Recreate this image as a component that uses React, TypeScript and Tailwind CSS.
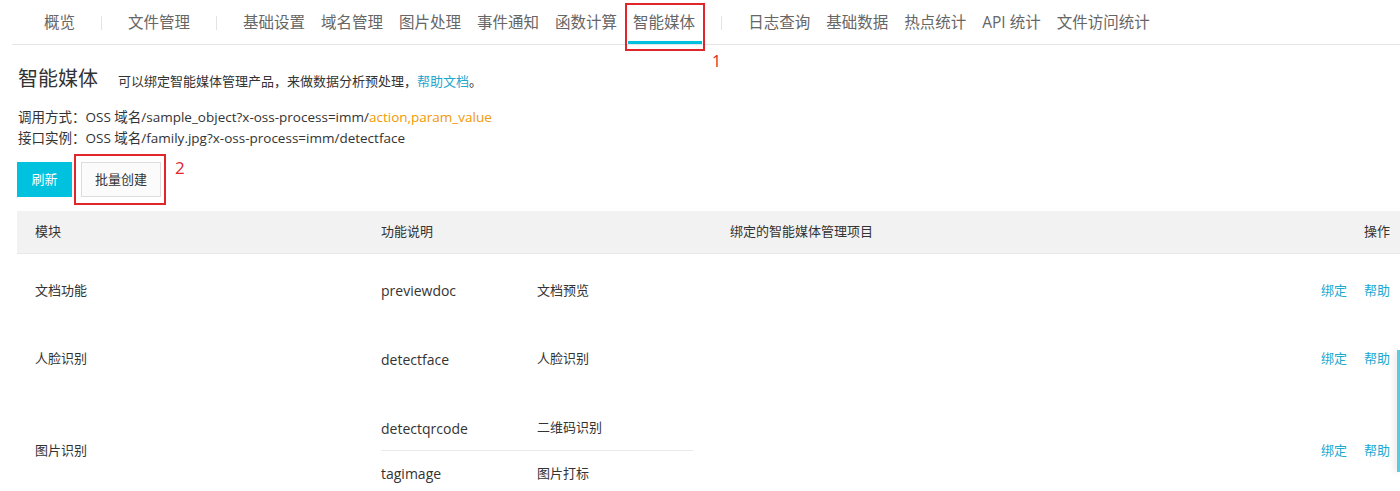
import React from 'react';

const font = { fontFamily: '"Open Sans", "Noto Sans CJK SC", sans-serif' };

const tabsA = ['概览'];
const tabsB = ['文件管理'];
const tabsC = ['基础设置', '域名管理', '图片处理', '事件通知', '函数计算', '智能媒体'];
const tabsD = ['日志查询', '基础数据', '热点统计', 'API 统计', '文件访问统计'];

const Tab = ({ label, active }: { label: string; active?: boolean }) => (
    <div className="relative flex h-full items-center px-[5px]">
        <span className="text-[#666]">{label}</span>
        {active && <div className="absolute bottom-0 left-0 right-[-2px] h-[3px] bg-[#00c1de]" />}
        {active && (
            <>
                <div className="absolute left-[-3px] right-[-5px] top-[1px] h-[48px] border-2 border-[#e0262b]" />
                <span className="absolute left-[84px] top-[47px] text-[16px] text-[#e0262b]">1</span>
            </>
        )}
    </div>
);

const Sep = () => <div className="mx-[21px] h-[14px] w-px bg-[#e3e3e3]" />;

const Group = ({ items, active }: { items: string[]; active?: string }) => (
    <div className="flex h-full items-center gap-[6px]">
        {items.map((t) => <Tab key={t} label={t} active={t === active} />)}
    </div>
);

const Link = ({ children }: { children: React.ReactNode }) => <span className="text-[#20a8cf]">{children}</span>;

const Ops = () => (
    <td className="pr-[10px] text-right">
        <Link>绑定</Link><span className="ml-[17px]"><Link>帮助</Link></span>
    </td>
);

const Fn = ({ code, desc }: { code: string; desc: string }) => (
    <div className="flex items-center">
        <span className="w-[156px] text-[14px]">{code}</span>
        <span>{desc}</span>
    </div>
);

export default function App() {
    return (
        <div className="relative h-[491px] w-[1400px] overflow-hidden bg-white text-[#333]" style={font}>
            <div className="ml-[12px] flex h-[45px] items-center border-b border-[#e5e5e5] pl-[27px] pt-[2px] text-[15.5px]">
                <Group items={tabsA} />
                <Sep />
                <Group items={tabsB} />
                <Sep />
                <Group items={tabsC} active="智能媒体" />
                <Sep />
                <Group items={tabsD} />
            </div>

            <div className="pl-[17px]">
                <div className="mt-[20px] flex items-baseline pl-px">
                    <h2 className="text-[20px] leading-[28px] text-[#333]">智能媒体</h2>
                    <span className="ml-[20px] text-[13px] text-[#333]">
                        可以绑定智能媒体管理产品，来做数据分析预处理，<Link>帮助文档</Link>。
                    </span>
                </div>

                <div className="mt-[14px] pl-px text-[13.5px] leading-[21px] text-[#333]">
                    <div>调用方式：OSS 域名/sample_object?x-oss-process=imm/<span className="text-[#f39800]">action,param_value</span></div>
                    <div>接口实例：OSS 域名/family.jpg?x-oss-process=imm/detectface</div>
                </div>

                <div className="mt-[13px] flex items-center gap-[9px]">
                    <button className="h-[35px] w-[55px] bg-[#00c1de] text-[13px] text-white">刷新</button>
                    <div className="relative">
                        <button className="h-[35px] w-[80px] border border-[#ddd] bg-[#fbfbfb] text-[13px] text-[#333]">批量创建</button>
                        <div className="absolute left-[-7px] top-[-8px] h-[51px] w-[92px] border-2 border-[#e0262b]" />
                        <span className="absolute left-[94px] top-[-7px] text-[17px] text-[#e0262b]">2</span>
                    </div>
                </div>

                <table className="mt-[14px] w-[1383px] border-collapse text-[13px]">
                    <thead>
                        <tr className="h-[42px] border-b border-[#e8e8e8] bg-[#f2f2f2] text-left">
                            <th className="w-[364px] pl-[18px] font-normal">模块</th>
                            <th className="w-[349px] font-normal">功能说明</th>
                            <th className="font-normal">绑定的智能媒体管理项目</th>
                            <th className="w-[100px] pr-[10px] text-right font-normal">操作</th>
                        </tr>
                    </thead>
                    <tbody>
                        <tr className="h-[74px]">
                            <td className="pl-[18px]">文档功能</td>
                            <td><Fn code="previewdoc" desc="文档预览" /></td>
                            <td />
                            <Ops />
                        </tr>
                        <tr className="h-[64px]">
                            <td className="pl-[18px]">人脸识别</td>
                            <td><Fn code="detectface" desc="人脸识别" /></td>
                            <td />
                            <Ops />
                        </tr>
                        <tr>
                            <td className="pl-[18px]">图片识别</td>
                            <td className="py-[15px]">
                                <div className="flex h-[45px] w-[312px] items-center border-b border-[#eaeaea]">
                                    <Fn code="detectqrcode" desc="二维码识别" />
                                </div>
                                <div className="flex h-[45px] items-center">
                                    <Fn code="tagimage" desc="图片打标" />
                                </div>
                            </td>
                            <td />
                            <Ops />
                        </tr>
                    </tbody>
                </table>
            </div>

            <div className="absolute right-0 top-[350px] h-[122px] w-[3px] bg-[#5ec8dc] shadow-[-2px_0_6px_rgba(0,0,0,0.15)]" />
        </div>
    );
}
